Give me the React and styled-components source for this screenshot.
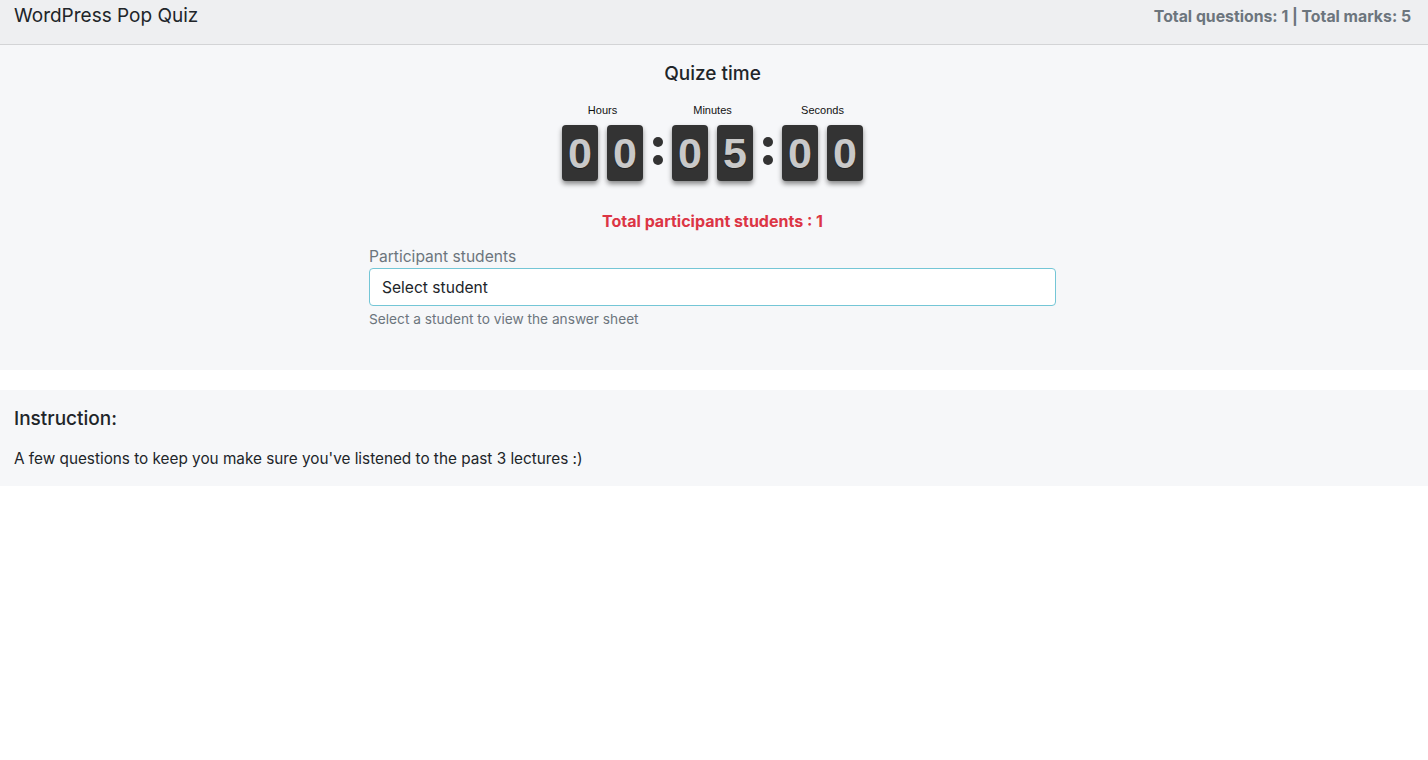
import React from "react";
import styled, { createGlobalStyle } from "styled-components";

const GlobalStyle = createGlobalStyle`
  body {
    margin: 0;
    background: #fff;
    font-family: Inter, "Noto Sans", sans-serif;
    color: #212529;
  }
`;

const Header = styled.header`
  height: 44px;
  background: #eeeff1;
  border-bottom: 1px solid #d3d4d6;
  display: flex;
  align-items: flex-start;
  justify-content: space-between;
  padding: 0 17px 0 14px;
`;

const Title = styled.h1`
  margin: 4px 0 0;
  font-size: 19px;
  font-weight: 400;
`;

const Totals = styled.div`
  margin-top: 7px;
  font-size: 15.8px;
  font-weight: 700;
  color: #6c757d;
`;

const Section = styled.section`
  background: #f6f7f9;
  padding: ${(p) => p.$pad};
  margin-bottom: ${(p) => p.$gap || "0"};
`;

const Centered = styled.div`
  display: flex;
  flex-direction: column;
  align-items: center;
`;

const SubTitle = styled.h2`
  margin: 0;
  font-size: 19px;
  font-weight: 500;
  line-height: 28px;
`;

const Clock = styled.div`
  display: flex;
  align-items: flex-end;
  margin-top: 16px;
  font-family: "Liberation Sans", Arial, sans-serif;
`;

const Unit = styled.div`
  display: flex;
  flex-direction: column;
  align-items: center;
`;

const UnitLabel = styled.div`
  font-size: 11px;
  line-height: 13px;
  color: #111;
  margin-bottom: 8px;
`;

const Pair = styled.div`
  display: flex;
  gap: 9px;
`;

const Digit = styled.div`
  width: 36px;
  height: 56px;
  background: #333333;
  border-radius: 4px;
  box-shadow: 0 3px 5px rgba(0, 0, 0, 0.45);
  color: #c9c9c9;
  font-size: 43px;
  font-weight: 700;
  display: flex;
  align-items: center;
  justify-content: center;
  text-shadow: 0 1px 1px rgba(0, 0, 0, 0.4);
`;

const Colon = styled.div`
  width: 29px;
  height: 56px;
  display: flex;
  flex-direction: column;
  align-items: center;
  justify-content: center;
  gap: 8px;
  padding-bottom: 4px;
  box-sizing: border-box;
  &::before,
  &::after {
    content: "";
    width: 10px;
    height: 10px;
    border-radius: 50%;
    background: #333;
  }
`;

const Participants = styled.div`
  margin-top: 30px;
  font-size: 16px;
  font-weight: 700;
  color: #dc3545;
`;

const Form = styled.div`
  width: 687px;
  margin: 16px auto 0;
`;

const Label = styled.label`
  display: block;
  font-size: 15.6px;
  color: #6c757d;
  margin-bottom: 2px;
`;

const Select = styled.div`
  height: 38px;
  box-sizing: border-box;
  border: 1px solid #74c6d6;
  border-radius: 4px;
  background: #fff;
  display: flex;
  align-items: center;
  padding: 0 12px;
  font-size: 15.6px;
  color: #212529;
`;

const Help = styled.small`
  display: block;
  margin-top: 5px;
  font-size: 13.7px;
  color: #6c757d;
`;

const InstrTitle = styled.h3`
  margin: 0;
  font-size: 19px;
  font-weight: 500;
`;

const InstrText = styled.p`
  margin: 19px 0 0;
  font-size: 15.3px;
`;

function TimeUnit({ label, value }) {
  return (
    <Unit>
      <UnitLabel>{label}</UnitLabel>
      <Pair>
        {value.split("").map((d, i) => (
          <Digit key={i}>{d}</Digit>
        ))}
      </Pair>
    </Unit>
  );
}

export default function App() {
  return (
    <>
      <GlobalStyle />
      <Header>
        <Title>WordPress Pop Quiz</Title>
        <Totals>Total questions: 1 | Total marks: 5</Totals>
      </Header>

      <Section $pad="15px 3px 43px 0" $gap="20px">
        <Centered>
          <SubTitle>Quize time</SubTitle>
          <Clock>
            <TimeUnit label="Hours" value="00" />
            <Colon />
            <TimeUnit label="Minutes" value="05" />
            <Colon />
            <TimeUnit label="Seconds" value="00" />
          </Clock>
          <Participants>Total participant students : 1</Participants>
        </Centered>
        <Form>
          <Label>Participant students</Label>
          <Select>Select student</Select>
          <Help>Select a student to view the answer sheet</Help>
        </Form>
      </Section>

      <Section $pad="17px 14px 18px">
        <InstrTitle>Instruction:</InstrTitle>
        <InstrText>
          A few questions to keep you make sure you've listened to the past 3 lectures :)
        </InstrText>
      </Section>
    </>
  );
}
